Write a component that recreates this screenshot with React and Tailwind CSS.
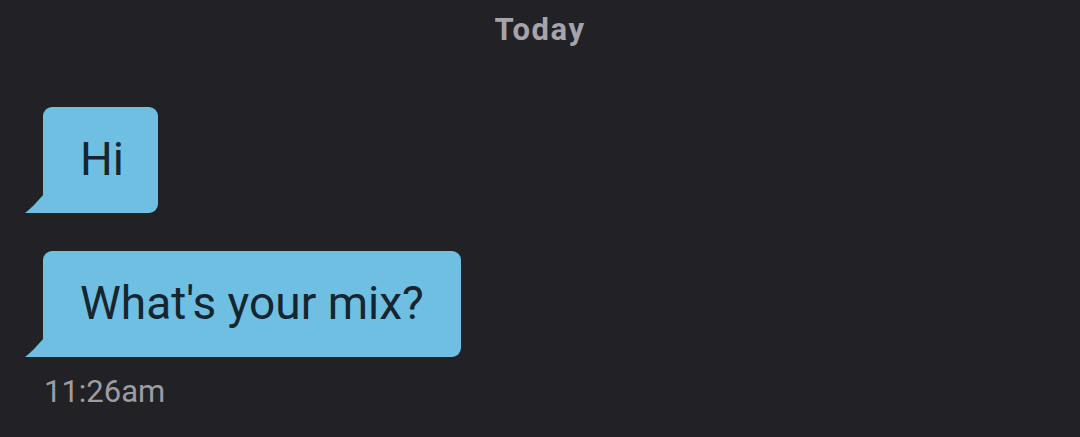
export default function App() {
  const Bubble = ({ children, pr }) => (
    <div className="relative self-start">
      <svg className="absolute left-[-18px] bottom-0" width="19" height="19" viewBox="0 0 19 19">
        <path d="M19 0 L19 19 L0 19 Q4 16 9 11 Z" fill="#6ebfe1" />
      </svg>
      <div className={"bg-[#6ebfe1] rounded-[9px] rounded-bl-none h-[106px] flex items-center pl-[37px] pb-[2px] text-[46px] text-[#16252f] leading-none " + pr} style={{ fontFamily: "Roboto, sans-serif" }}>
        {children}
      </div>
    </div>
  );
  return (
    <div className="w-[1080px] h-[437px] bg-[#222226] flex flex-col overflow-hidden" style={{ fontFamily: "Roboto, sans-serif" }}>
      <div className="text-center text-[31px] font-bold tracking-[1.5px] text-[#a4a4aa] pt-[10px] leading-[40px]">Today</div>
      <div className="flex flex-col pl-[43px] mt-[57px] gap-[38px]">
        <Bubble pr="pr-[34px]">Hi</Bubble>
        <Bubble pr="pr-[37px]">What's your mix?</Bubble>
      </div>
      <div className="pl-[44px] mt-[15px] text-[31px] text-[#9c9ca2] leading-[40px]">11:26am</div>
    </div>
  );
}
